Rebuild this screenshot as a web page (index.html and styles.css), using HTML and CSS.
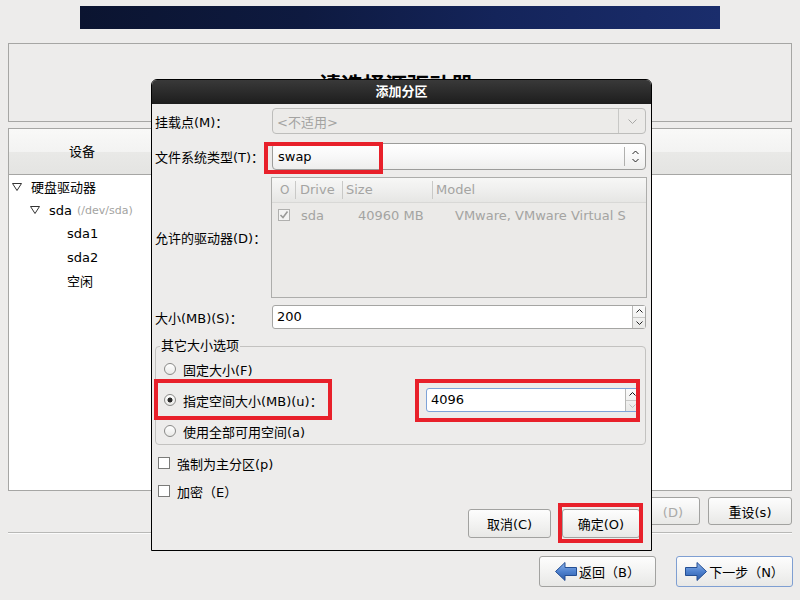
FILE: index.html
```html
<!DOCTYPE html>
<html lang="zh-CN">
<head>
    <meta charset="UTF-8">
    <title>添加分区</title>
    <link rel="stylesheet" href="styles.css">
</head>
<body>
    <div class="banner"></div>

    <div class="header-box">
        <h1 class="page-title">请选择源驱动器</h1>
    </div>

    <div class="device-table">
        <div class="table-head">
            <div class="head-cell">设备</div>
        </div>
        <ul class="tree">
            <li class="level-0"><svg class="expander" width="10" height="8" viewBox="0 0 10 8"><polygon points="0.5,0.5 9.5,0.5 5,7.5" fill="#fff" stroke="#333"/></svg><span>硬盘驱动器</span></li>
            <li class="level-1"><svg class="expander" width="10" height="8" viewBox="0 0 10 8"><polygon points="0.5,0.5 9.5,0.5 5,7.5" fill="#fff" stroke="#333"/></svg><span>sda</span><span class="dev-path">(/dev/sda)</span></li>
            <li class="level-2">sda1</li>
            <li class="level-2">sda2</li>
            <li class="level-2">空闲</li>
        </ul>
    </div>

    <div class="action-row">
        <button class="btn btn-delete" disabled>删除<span class="hot-key">(D)</span></button>
        <button class="btn btn-reset">重设(s)</button>
    </div>

    <div class="separator"></div>

    <div class="nav-row">
        <button class="btn nav-btn">
            <svg width="22" height="19" viewBox="0 0 22 19">
                <defs><linearGradient id="blueL" x1="0" y1="0" x2="0" y2="1"><stop offset="0" stop-color="#8fb5ea"/><stop offset="0.5" stop-color="#4f82cf"/><stop offset="1" stop-color="#2a5aa6"/></linearGradient></defs>
                <polygon points="0.5,9.5 10,0.5 10,5.5 21.5,5.5 21.5,13.5 10,13.5 10,18.5" fill="url(#blueL)" stroke="#244f94"/>
            </svg>
            返回（B）
        </button>
        <button class="btn nav-btn focused">
            <svg width="22" height="19" viewBox="0 0 22 19">
                <defs><linearGradient id="blueR" x1="0" y1="0" x2="0" y2="1"><stop offset="0" stop-color="#8fb5ea"/><stop offset="0.5" stop-color="#4f82cf"/><stop offset="1" stop-color="#2a5aa6"/></linearGradient></defs>
                <polygon points="21.5,9.5 12,0.5 12,5.5 0.5,5.5 0.5,13.5 12,13.5 12,18.5" fill="url(#blueR)" stroke="#244f94"/>
            </svg>
            下一步（N）
        </button>
    </div>

    <div class="dialog">
        <div class="dialog-title">添加分区</div>
        <div class="dialog-body">
            <div class="form-row row-mount">
                <div class="form-label">挂载点(M)：</div>
                <div class="combo disabled">
                    <div class="combo-text">&lt;不适用&gt;</div>
                    <div class="combo-button">
                        <svg width="9" height="5" viewBox="0 0 9 5"><polyline points="0.5,0.5 4.5,4.5 8.5,0.5" fill="none" stroke="#a8a8a6"/></svg>
                    </div>
                </div>
            </div>

            <div class="form-row row-fstype">
                <div class="form-label">文件系统类型(T)：</div>
                <div class="combo active">
                    <div class="combo-text">swap</div>
                    <div class="combo-sep"></div>
                    <div class="combo-arrows">
                        <svg width="7" height="13" viewBox="0 0 7 13"><polyline points="0.5,4 3.5,1 6.5,4" fill="none" stroke="#222"/><polyline points="0.5,9 3.5,12 6.5,9" fill="none" stroke="#222"/></svg>
                    </div>
                </div>
            </div>

            <div class="form-row row-drives">
                <div class="form-label">允许的驱动器(D)：</div>
                <div class="drive-list">
                    <div class="list-head">
                        <div class="cell c-check">O</div>
                        <div class="cell c-drive">Drive</div>
                        <div class="cell c-size">Size</div>
                        <div class="cell c-model">Model</div>
                    </div>
                    <div class="list-row">
                        <div class="cell c-check">
                            <span class="list-check">
                                <svg width="10" height="10" viewBox="0 0 10 10"><polyline points="1.5,5 4,7.5 8.5,1.5" fill="none" stroke="#9a9a98" stroke-width="1.6"/></svg>
                            </span>
                        </div>
                        <div class="cell c-drive">sda</div>
                        <div class="cell c-size">40960 MB</div>
                        <div class="cell c-model">VMware, VMware Virtual S</div>
                    </div>
                </div>
            </div>

            <div class="form-row row-size">
                <div class="form-label">大小(MB)(S)：</div>
                <div class="spin">
                    <div class="spin-text">200</div>
                    <div class="spin-buttons">
                        <div class="spin-up"><svg width="7" height="4" viewBox="0 0 7 4"><polyline points="0.5,3.5 3.5,0.5 6.5,3.5" fill="none" stroke="#222"/></svg></div>
                        <div class="spin-down"><svg width="7" height="4" viewBox="0 0 7 4"><polyline points="0.5,0.5 3.5,3.5 6.5,0.5" fill="none" stroke="#222"/></svg></div>
                    </div>
                </div>
            </div>

            <fieldset class="size-options">
                <legend>其它大小选项</legend>
                <div class="radio-row">
                    <span class="radio"></span>固定大小(F)
                </div>
                <div class="radio-row">
                    <span class="radio checked"></span>指定空间大小(MB)(u)：
                    <div class="spin spin-focus">
                        <div class="spin-text">4096</div>
                        <div class="spin-buttons">
                            <div class="spin-up"><svg width="7" height="4" viewBox="0 0 7 4"><polyline points="0.5,3.5 3.5,0.5 6.5,3.5" fill="none" stroke="#111"/></svg></div>
                            <div class="spin-down"><svg width="7" height="4" viewBox="0 0 7 4"><polyline points="0.5,0.5 3.5,3.5 6.5,0.5" fill="none" stroke="#bdbdbb"/></svg></div>
                        </div>
                    </div>
                </div>
                <div class="radio-row">
                    <span class="radio"></span>使用全部可用空间(a)
                </div>
            </fieldset>

            <div class="check-row">
                <span class="checkbox"></span>強制为主分区(p)
            </div>
            <div class="check-row">
                <span class="checkbox"></span>加密（E）
            </div>

            <div class="dialog-buttons">
                <button class="btn btn-cancel">取消(C)</button>
                <button class="btn btn-ok">确定(O)</button>
            </div>
        </div>

        <div class="mark mark-fstype"></div>
        <div class="mark mark-radio"></div>
        <div class="mark mark-spin"></div>
        <div class="mark mark-ok"></div>
    </div>
</body>
</html>
```

FILE: styles.css
```css
body {
    margin: 0;
    width: 800px;
    height: 600px;
    overflow: hidden;
    position: relative;
    background-color: #edeceb;
    font-family: "DejaVu Sans", "Noto Sans CJK SC", sans-serif;
    font-size: 13px;
    color: #000;
}

.banner {
    width: 640px;
    height: 23px;
    margin: 6px auto 0;
    background: linear-gradient(90deg, #0b1430 0%, #0e1a40 35%, #14245a 65%, #1a2d6c 100%);
}

.header-box {
    margin: 14px 8px 0;
    height: 79px;
    box-sizing: border-box;
    border: 1px solid #a6a6a4;
    display: flex;
    align-items: center;
    justify-content: center;
}

.page-title {
    margin: 0 8px 0 0;
    font-size: 22px;
    font-weight: bold;
}

.device-table {
    margin: 6px 8px 0;
    height: 363px;
    box-sizing: border-box;
    border: 1px solid #a6a6a4;
    background-color: #fff;
}

.table-head {
    height: 46px;
    box-sizing: border-box;
    border-bottom: 1px solid #a6a6a4;
    background: linear-gradient(#f9f9f8 0%, #f3f3f2 50%, #e9e9e7 52%, #e4e4e2 100%);
}

.head-cell {
    width: 146px;
    line-height: 45px;
    text-align: center;
}

.tree {
    list-style: none;
    margin: 0;
    padding: 0;
}

.tree li {
    height: 23.5px;
    display: flex;
    align-items: center;
}

.tree .expander {
    flex: none;
    margin-right: 9px;
}

.level-0 { padding-left: 3px; }
.level-1 { padding-left: 21px; }
.level-2 { padding-left: 58px; }

.dev-path {
    margin-left: 5px;
    color: #a3a3a1;
    font-size: 11px;
}

.btn {
    font: inherit;
    color: #000;
    height: 28px;
    box-sizing: border-box;
    padding: 0;
    border: 1px solid #a2a2a0;
    border-radius: 3px;
    background: linear-gradient(#fdfdfd 0%, #f3f3f2 50%, #e8e8e6 100%);
}

.action-row {
    margin-top: 6px;
    height: 28px;
    display: flex;
    justify-content: flex-end;
    gap: 8px;
    padding-right: 8px;
}

.btn-delete {
    width: 100px;
    padding-right: 16px;
    text-align: right;
    color: #a9a9a7;
    white-space: nowrap;
}

.btn-delete .hot-key {
    margin-left: 14px;
}

.btn-reset {
    width: 84px;
}

.separator {
    margin: 7px 8px 0;
    height: 1px;
    background-color: #b8b8b6;
    border-bottom: 1px solid #fbfbfb;
}

.nav-row {
    margin-top: 22px;
    display: flex;
    justify-content: flex-end;
    gap: 20px;
    padding-right: 7px;
}

.nav-btn {
    width: 117px;
    height: 31px;
    display: flex;
    align-items: center;
    justify-content: center;
    gap: 2px;
}

.nav-btn.focused {
    border-color: #7f9fd2;
}

/* dialog */

.dialog {
    position: absolute;
    left: 151px;
    top: 79px;
    width: 501px;
    height: 472px;
    box-sizing: border-box;
    border: 1px solid #000;
    border-radius: 6px 6px 0 0;
    background-color: #edeceb;
}

.dialog-title {
    height: 24px;
    line-height: 24px;
    text-align: center;
    color: #fff;
    font-weight: bold;
    border-radius: 5px 5px 0 0;
    background: linear-gradient(#393939, #1d1d1d);
}

.dialog-body {
    padding: 4px 5px 0 3px;
}

.form-row {
    display: flex;
    align-items: center;
}

.form-label {
    width: 117px;
    flex: none;
    white-space: nowrap;
}

.row-mount { height: 26px; margin-bottom: 9px; }
.row-fstype { height: 27px; margin-bottom: 7px; }
.row-drives { height: 121px; margin-bottom: 7px; }
.row-size { height: 24px; }

.combo {
    flex: 1;
    height: 100%;
    box-sizing: border-box;
    border: 1px solid #a4a4a2;
    border-radius: 4px;
    display: flex;
    align-items: center;
}

.combo-text {
    flex: 1;
    padding-left: 5px;
}

.combo.disabled {
    border-color: #bdbdbb;
    background-color: #ecebe9;
    color: #a3a3a1;
}

.combo.disabled .combo-text {
    padding-left: 4px;
}

.combo-button {
    width: 26px;
    align-self: stretch;
    border-left: 1px solid #c8c8c6;
    display: flex;
    align-items: center;
    justify-content: center;
}

.combo.active {
    border-color: #9c9c9a;
    background: linear-gradient(#ffffff 0%, #f8f8f8 50%, #eeeeed 100%);
}

.combo-sep {
    width: 1px;
    height: 19px;
    background-color: #b0b0ae;
}

.combo-arrows {
    width: 20px;
    display: flex;
    justify-content: center;
}

.drive-list {
    flex: 1;
    height: 121px;
    margin: 0 -1px;
    box-sizing: border-box;
    border: 1px solid #adadab;
    background-color: #ebeae8;
    overflow: hidden;
    color: #a4a4a2;
}

.list-head {
    height: 24px;
    display: flex;
    align-items: center;
    border-bottom: 1px solid #d8d8d6;
    background: linear-gradient(#f7f7f6 0%, #efefee 50%, #e6e6e4 100%);
}

.list-row {
    height: 24px;
    display: flex;
    align-items: center;
}

.cell {
    flex: none;
    box-sizing: border-box;
    white-space: nowrap;
}

.c-check { width: 23px; }
.c-drive { width: 47px; }
.c-size { width: 90px; }
.c-model { flex: 1; }

.list-head .c-check {
    padding-left: 8px;
    font-size: 12px;
}

.list-head .c-drive,
.list-head .c-size,
.list-head .c-model {
    border-left: 1px solid #c9c9c7;
    height: 18px;
    line-height: 18px;
}

.list-head .c-drive { padding-left: 4px; }
.list-head .c-size { padding-left: 3px; }
.list-head .c-model { padding-left: 3px; }

.list-row .c-check { padding-left: 6px; display: flex; }
.list-row .c-drive { padding-left: 6px; }
.list-row .c-size { padding-left: 16px; }
.list-row .c-model { padding-left: 23px; }

.list-check {
    width: 12px;
    height: 12px;
    box-sizing: border-box;
    border: 1px solid #b0b0ae;
    background-color: #f3f3f2;
    display: flex;
    align-items: center;
    justify-content: center;
}

.spin {
    flex: 1;
    height: 24px;
    display: flex;
    box-sizing: border-box;
    border: 1px solid #a5a5a3;
    border-radius: 3px;
    background-color: #fff;
}

.spin-text {
    flex: 1;
    padding-left: 4px;
    line-height: 22px;
}

.spin-buttons {
    width: 12px;
    border-left: 1px solid #b8b8b6;
    display: flex;
    flex-direction: column;
    background: linear-gradient(#fbfbfb, #e9e9e7);
}

.spin-up,
.spin-down {
    flex: 1;
    display: flex;
    align-items: center;
    justify-content: center;
}

.spin-up {
    border-bottom: 1px solid #c8c8c6;
}

.size-options {
    margin: 10px 0 0;
    padding: 4px 5px 1px 8px;
    border: 1px solid #c3c2c0;
    border-radius: 4px;
    min-width: 0;
}

.size-options legend {
    margin-left: -4px;
    padding: 0 1px;
    line-height: 14px;
}

.radio-row {
    height: 24px;
    display: flex;
    align-items: center;
    white-space: nowrap;
}

.radio-row + .radio-row {
    margin-top: 7px;
}

.radio {
    width: 12px;
    height: 12px;
    box-sizing: border-box;
    border: 1px solid #8a8a88;
    border-radius: 50%;
    background: linear-gradient(#ffffff, #e9e9e7);
    margin-right: 7px;
}

.radio.checked {
    background: radial-gradient(circle, #2a2a2a 0, #2a2a2a 2.2px, transparent 2.8px), linear-gradient(#ffffff, #e9e9e7);
}

.spin-focus {
    flex: none;
    width: 214px;
    margin-left: auto;
    border-color: #7ea3d8;
}

.spin-focus .spin-buttons {
    width: 13px;
}

.check-row {
    height: 20px;
    margin-top: 8px;
    display: flex;
    align-items: center;
}

.checkbox {
    width: 12px;
    height: 12px;
    box-sizing: border-box;
    border: 1px solid #7b7b79;
    background-color: #fff;
    margin-left: 3px;
    margin-right: 7px;
}

.dialog-buttons {
    margin-top: 8px;
    padding-right: 6px;
    display: flex;
    justify-content: flex-end;
    gap: 11px;
}

.btn-cancel {
    width: 83px;
    height: 29px;
}

.btn-ok {
    width: 78px;
    height: 29px;
}

/* red annotation boxes drawn over the dialog */
.mark {
    position: absolute;
    box-sizing: border-box;
    border: 4px solid #e8202a;
}

.mark-fstype { left: 112px; top: 62px; width: 119px; height: 32px; }
.mark-radio { left: 2px; top: 299px; width: 178px; height: 41px; }
.mark-spin { left: 263px; top: 299px; width: 225px; height: 43px; }
.mark-ok { left: 406px; top: 423px; width: 85px; height: 40px; }
```
